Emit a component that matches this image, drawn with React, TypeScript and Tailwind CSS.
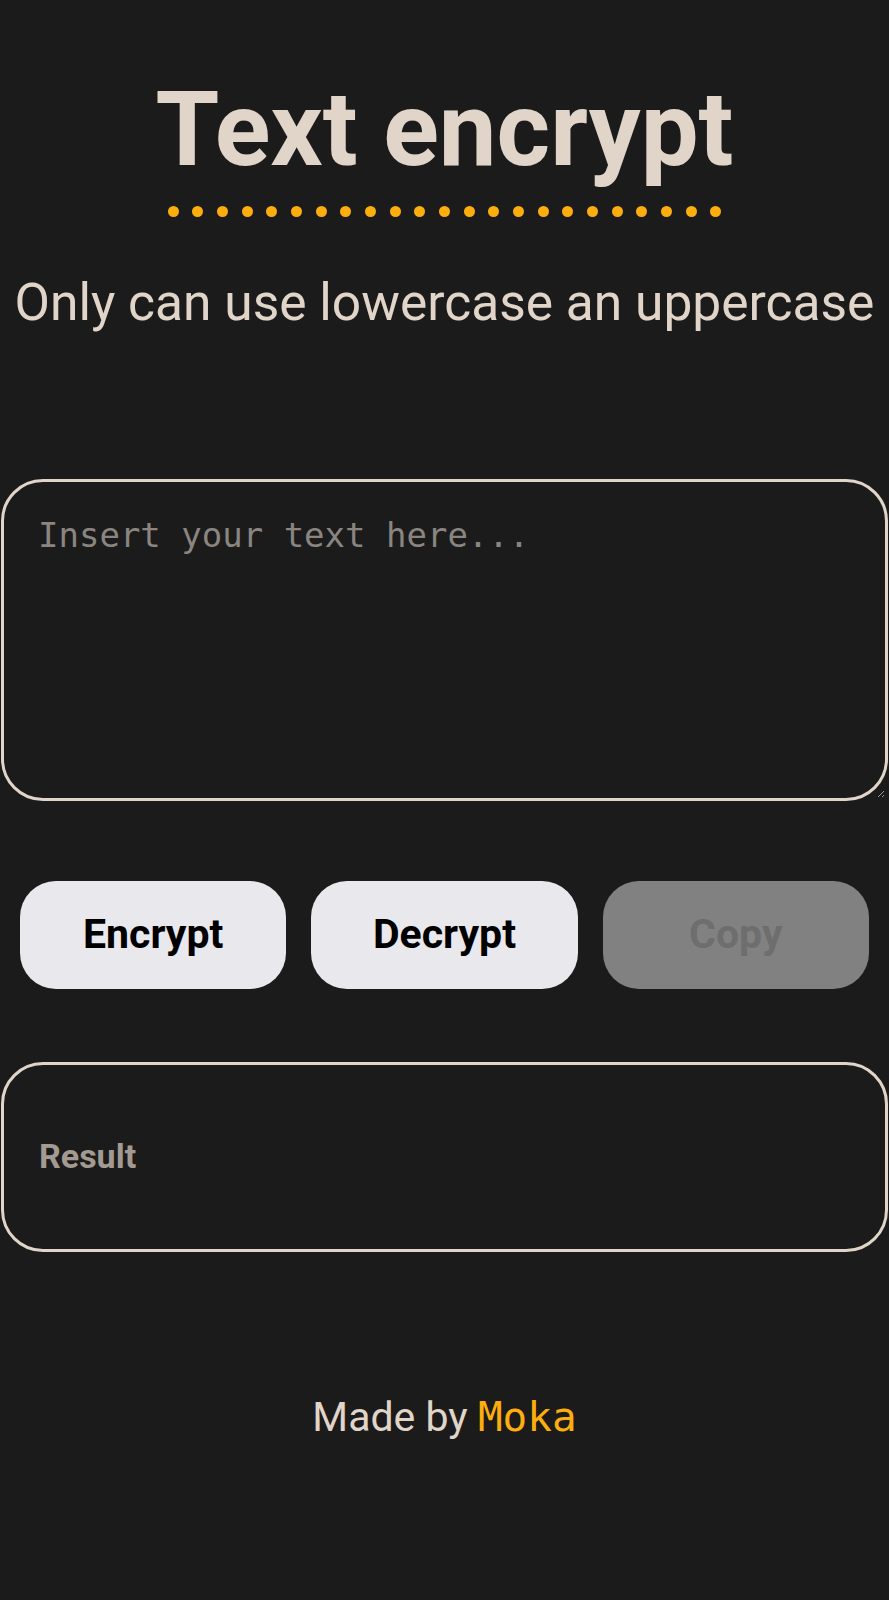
import { useState } from 'react';

const DOTS = Array.from({ length: 23 }, (_, i) => i);

export default function App() {
  const [text, setText] = useState('');

  return (
    <div className="min-h-[1600px] bg-[#1b1b1b] font-['Roboto',_'Liberation_Sans',_sans-serif]">
      {/* Header */}
      <div className="flex flex-col items-center pt-[78px]">
        <h1 className="text-[103px] leading-none font-bold text-[#e1d5c9]">Text encrypt</h1>
        <div className="mt-[25px] flex w-[554px] justify-between">
          {DOTS.map((i) => (
            <span key={i} className="h-[11px] w-[11px] rounded-full bg-[#fbae0d]" />
          ))}
        </div>
        <p className="mt-[60px] text-[51.5px] leading-none whitespace-nowrap text-[#e1d5c9]">
          Only can use lowercase an uppercase
        </p>
      </div>

      {/* Input */}
      <div className="mt-[150px] px-[1px]">
        <textarea
          value={text}
          onChange={(e) => setText(e.target.value)}
          placeholder="Insert your text here..."
          className="block h-[322px] w-full rounded-[42px] border-[3px] border-[#e1d5c9] bg-[#1b1b1b] px-[34px] pt-[33px] font-['DejaVu_Sans_Mono',_monospace] text-[34px] leading-[1.2] text-[#e1d5c9] outline-none placeholder:text-[#8a8580]"
        />
      </div>

      {/* Actions */}
      <div className="mt-[80px] grid grid-cols-3 gap-[25px] px-[20px]">
        <button className="h-[108px] rounded-[36px] bg-[#e9e8ed] text-[41px] font-bold text-black">Encrypt</button>
        <button className="h-[108px] rounded-[36px] bg-[#e9e8ed] text-[41px] font-bold text-black">Decrypt</button>
        <button disabled className="h-[108px] rounded-[36px] bg-[#818181] text-[41px] font-bold text-[#6e6e6e]">
          Copy
        </button>
      </div>

      {/* Result */}
      <div className="mt-[73px] px-[1px]">
        <div className="flex h-[190px] items-center rounded-[42px] border-[3px] border-[#e1d5c9] px-[35px]">
          <span className="text-[34px] font-bold text-[#a39a92]">Result</span>
        </div>
      </div>

      {/* Footer */}
      <p className="mt-[145px] text-center text-[41px] leading-none text-[#e1d5c9]">
        Made by <span className="font-['DejaVu_Sans_Mono',_monospace] text-[#fbae0d]">Moka</span>
      </p>
    </div>
  );
}
